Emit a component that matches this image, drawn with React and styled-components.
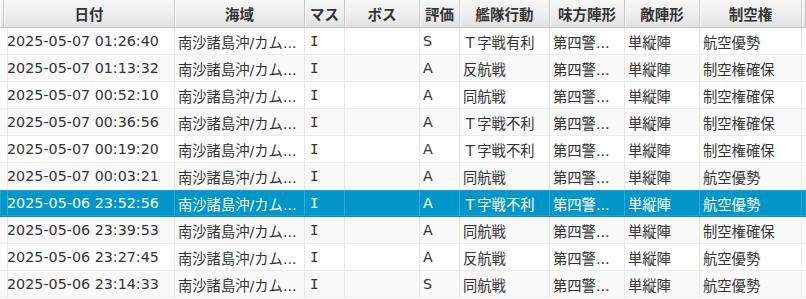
import React from 'react';
import styled, { createGlobalStyle } from 'styled-components';

const GlobalStyle = createGlobalStyle`
  html, body {
    margin: 0;
    padding: 0;
    background: #ffffff;
  }
  body {
    font-family: "DejaVu Sans", "Noto Sans CJK JP", sans-serif;
    overflow: hidden;
  }
`;

// 列幅（右罫線を含む）
const COLS = '4px 171px 130px 40px 75px 40px 90px 75px 75px 102px 1fr';

const columns = [
  { key: 'pad', title: '' },
  { key: 'date', title: '日付' },
  { key: 'area', title: '海域' },
  { key: 'cell', title: 'マス', mono: true },
  { key: 'boss', title: 'ボス' },
  { key: 'rank', title: '評価' },
  { key: 'engage', title: '艦隊行動' },
  { key: 'friend', title: '味方陣形' },
  { key: 'enemy', title: '敵陣形' },
  { key: 'air', title: '制空権' },
  { key: 'rest', title: '' },
];

const rows = [
  { date: '2025-05-07 01:26:40', rank: 'S', engage: 'Ｔ字戦有利', air: '航空優勢' },
  { date: '2025-05-07 01:13:32', rank: 'A', engage: '反航戦', air: '制空権確保' },
  { date: '2025-05-07 00:52:10', rank: 'A', engage: '同航戦', air: '制空権確保' },
  { date: '2025-05-07 00:36:56', rank: 'A', engage: 'Ｔ字戦不利', air: '制空権確保' },
  { date: '2025-05-07 00:19:20', rank: 'A', engage: 'Ｔ字戦不利', air: '制空権確保' },
  { date: '2025-05-07 00:03:21', rank: 'A', engage: '同航戦', air: '航空優勢' },
  { date: '2025-05-06 23:52:56', rank: 'A', engage: 'Ｔ字戦不利', air: '航空優勢', selected: true },
  { date: '2025-05-06 23:39:53', rank: 'A', engage: '同航戦', air: '制空権確保' },
  { date: '2025-05-06 23:27:45', rank: 'A', engage: '反航戦', air: '航空優勢' },
  { date: '2025-05-06 23:14:33', rank: 'S', engage: '同航戦', air: '航空優勢' },
].map((r) => ({
  ...r,
  pad: '',
  area: '南沙諸島沖/カム...',
  cell: 'I',
  boss: '',
  friend: '第四警...',
  enemy: '単縦陣',
  rest: '',
}));

const Table = styled.div`
  width: 806px;
  height: 299px;
  overflow: hidden;
  background: #ffffff;
`;

const HeaderRow = styled.div`
  display: grid;
  grid-template-columns: ${COLS};
  height: 28px;
  box-sizing: border-box;
  border-bottom: 1px solid #c5c5c5;
  background: linear-gradient(to bottom, #f7f7f7 0%, #ececec 60%, #e2e2e2 100%);
`;

const HeaderCell = styled.div`
  display: flex;
  align-items: center;
  justify-content: center;
  box-sizing: border-box;
  border-right: 1px solid #c8c8c8;
  box-shadow: inset 1px 0 0 #fbfbfb;
  font-size: 14.5px;
  font-weight: bold;
  color: #333333;
  white-space: nowrap;
  overflow: hidden;
`;

const Row = styled.div`
  display: grid;
  grid-template-columns: ${COLS};
  height: 27px;
  box-sizing: border-box;
  border-bottom: 1px solid ${(p) => (p.$selected ? '#0093c5' : '#ececec')};
  background: ${(p) => (p.$selected ? '#0096c9' : p.$odd ? '#f9f9f9' : '#ffffff')};
  color: ${(p) => (p.$selected ? '#ffffff' : '#333333')};
  box-shadow: ${(p) => (p.$selected ? 'inset 0 0 0 1px #1ba3d1' : 'none')};
`;

const Cell = styled.div`
  display: flex;
  align-items: center;
  box-sizing: border-box;
  padding: 0 4px 0 ${(p) => (p.$mono ? '5px' : '3px')};
  border-right: 1px solid ${(p) => (p.$selected ? '#33a9d3' : '#e8e8e8')};
  font-family: ${(p) =>
    p.$mono ? '"DejaVu Sans Mono", monospace' : '"DejaVu Sans", "Noto Sans CJK JP", sans-serif'};
  font-size: 14.3px;
  white-space: nowrap;
  overflow: hidden;
`;

export default function App() {
  return (
    <>
      <GlobalStyle />
      <Table>
        <HeaderRow>
          {columns.map((c) => (
            <HeaderCell key={c.key}>{c.title}</HeaderCell>
          ))}
        </HeaderRow>
        {rows.map((r, i) => (
          <Row key={r.date} $odd={i % 2 === 1} $selected={r.selected}>
            {columns.map((c) => (
              <Cell key={c.key} $selected={r.selected} $mono={c.mono}>
                {r[c.key]}
              </Cell>
            ))}
          </Row>
        ))}
      </Table>
    </>
  );
}
